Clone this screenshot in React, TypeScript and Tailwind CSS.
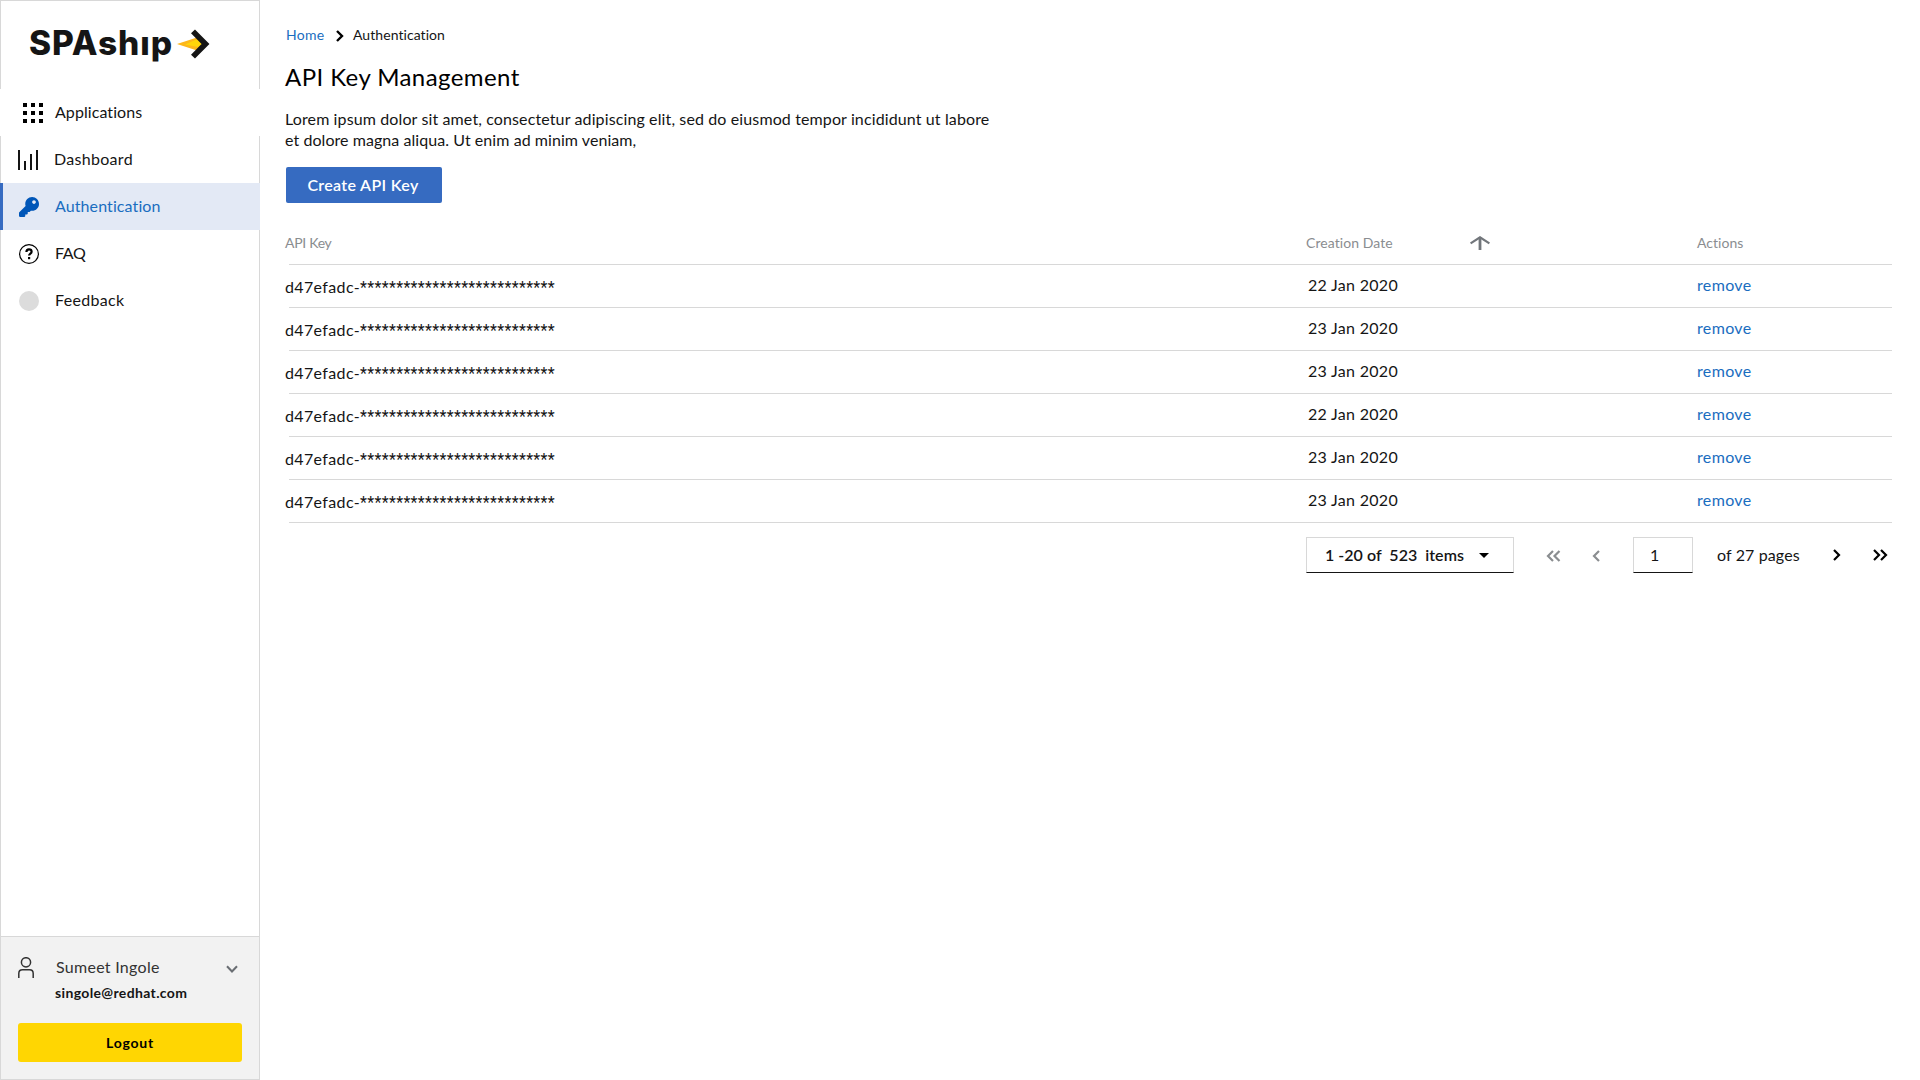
import type { ReactNode } from "react";

const rows = [
  { key: "d47efadc-", date: "22 Jan 2020" },
  { key: "d47efadc-", date: "23 Jan 2020" },
  { key: "d47efadc-", date: "23 Jan 2020" },
  { key: "d47efadc-", date: "22 Jan 2020" },
  { key: "d47efadc-", date: "23 Jan 2020" },
  { key: "d47efadc-", date: "23 Jan 2020" },
];

const MASK = "*".repeat(27);

function LogoArrow() {
  return (
    <svg width="34" height="32" viewBox="0 0 34 32" className="mt-[27px] ml-[3px]">
      <path d="M0 16 20 9.600 26 16 20 22.400Z" fill="#fdb71b" />
      <path d="M8 16.400 19.500 11.500 26 16 21 19Z" fill="#ffd60a" />
      <path d="M16 3.400 28.500 16 16 28.600" fill="none" stroke="#151515" strokeWidth="5.6" />
    </svg>
  );
}

function GridIcon() {
  return (
    <svg width="20" height="20" viewBox="0 0 20 20" fill="#000" shapeRendering="crispEdges">
      {[0, 8, 16].map((y) => [0, 8, 16].map((x) => <rect key={`${x}-${y}`} x={x} y={y} width="4" height="4" />))}
    </svg>
  );
}

function BarsIcon() {
  return (
    <svg width="20" height="20" viewBox="0 0 20 20" fill="#151515" shapeRendering="crispEdges">
      <rect x="0" y="0" width="2" height="20" />
      <rect x="6" y="11" width="2" height="9" />
      <rect x="12" y="4" width="2" height="16" />
      <rect x="18" y="0" width="2" height="20" />
    </svg>
  );
}

function KeyIcon() {
  return (
    <svg width="20" height="20" viewBox="0 0 512 512" fill="#0056b8">
      <path d="M512 176.001C512 273.203 433.202 352 336 352c-11.22 0-22.19-1.062-32.827-3.069l-24.012 27.014A23.999 23.999 0 0 1 261.223 384H224v40c0 13.255-10.745 24-24 24h-40v40c0 13.255-10.745 24-24 24H24c-13.255 0-24-10.745-24-24v-78.059c0-6.365 2.529-12.47 7.029-16.971l161.802-161.802C163.108 213.814 160 195.271 160 176 160 78.798 238.797.001 335.999 0 433.488-.001 512 78.511 512 176.001zM336 128c0 26.51 21.49 48 48 48s48-21.49 48-48-21.49-48-48-48-48 21.49-48 48z" />
    </svg>
  );
}

function HelpIcon() {
  return (
    <svg width="20" height="20" viewBox="0 0 20 20" fill="none" stroke="#000">
      <circle cx="10" cy="10" r="9.4" strokeWidth="1.2" />
      <path d="M7.4 8.1C7.4 6.3 8.5 5.4 10 5.4s2.6.9 2.6 2.3c0 1.900-2.500 1.900-2.500 3.900" strokeWidth="2.2" />
      <path d="M9 13h2.200v2.200H9z" fill="#000" stroke="none" />
    </svg>
  );
}

function UserIcon() {
  return (
    <svg width="16" height="21" viewBox="0 0 16 21" fill="none" stroke="#333" strokeWidth="1.5">
      <circle cx="8" cy="5.3" r="4.6" />
      <path d="M.8 21v-4.500q0-3.700 3.700-3.700h7q3.700 0 3.700 3.700V21" />
    </svg>
  );
}

function Chevrons({ path, width, className }: { path: string; width: number; className: string }) {
  return (
    <svg width={width} height="12" viewBox={`0 0 ${width} 12`} fill="none" stroke="currentColor" strokeWidth="2.2" className={className}>
      <path d={path} />
    </svg>
  );
}

function NavItem({ icon, label, labelClass, className = "" }: { icon: ReactNode; label: string; labelClass: string; className?: string }) {
  return (
    <a className={`flex h-[47px] items-center leading-5 ${className}`}>
      {icon}
      <span className={`pb-px ${labelClass}`}>{label}</span>
    </a>
  );
}

function Sidebar() {
  return (
    <aside className="flex w-[260px] flex-col">
      <div className="flex h-[89px] border border-b-0 border-[#d8d8d8] pl-[28px]">
        <span className="mt-[20px] h-[44px] w-[145px] font-['Inter'] text-[33.5px] leading-[44px] font-extrabold tracking-[0.9px] whitespace-nowrap text-[#151515]">
          SPAshıp
        </span>
        <LogoArrow />
      </div>
      <NavItem className="bg-white pl-[23px]" icon={<GridIcon />} label="Applications" labelClass="ml-3 tracking-[0.07px]" />
      <NavItem className="border-x border-[#d8d8d8] pl-[17px]" icon={<BarsIcon />} label="Dashboard" labelClass="ml-[16px] tracking-[0.3px]" />
      <NavItem className="border-l-[3px] border-[#366bc1] bg-[#e3e9f5] pl-4 text-[#1a6dc0]" icon={<KeyIcon />} label="Authentication" labelClass="ml-4 tracking-[0.1px]" />
      <NavItem className="border-x border-[#d8d8d8] pl-[18px]" icon={<HelpIcon />} label="FAQ" labelClass="ml-[16px] -tracking-[0.33px]" />
      <NavItem
        className="border-x border-[#d8d8d8] pl-[18px]"
        icon={<span className="size-5 rounded-full bg-[#dcdcdc]" />}
        label="Feedback"
        labelClass="ml-[16px] tracking-[0.32px]"
      />
      <div className="flex-1 border-x border-[#d8d8d8]" />
      <div className="h-[144px] border border-[#d8d8d8] bg-[#f2f2f2] px-[17px] pt-5">
        <div className="flex h-[21px]">
          <UserIcon />
          <span className="ml-[22px] w-[164px] leading-5 tracking-[0.28px] text-[#333]">Sumeet Ingole</span>
          <svg width="16" height="12" viewBox="0 0 16 12" fill="none" stroke="#6a6e73" strokeWidth="2" className="mt-[7px] ml-1">
            <path d="M3 2.200 8 7.500 13 2.200" />
          </svg>
        </div>
        <div className="mt-[5px] ml-[37px] text-sm leading-5 font-bold tracking-[0.35px] text-[#151515]">singole@redhat.com</div>
        <button className="mt-[20px] block h-[39px] w-[224px] rounded-[3px] bg-[#ffd602] pt-px text-sm font-bold tracking-[0.78px] text-black">Logout</button>
      </div>
    </aside>
  );
}

function Divider() {
  return <div className="ml-1 h-px bg-[#d8d8d8]" />;
}

function KeyTable() {
  return (
    <div className="w-[1607px]">
      <div className="grid h-[61px] grid-cols-[1021px_391px_195px] pt-[30px] text-sm leading-5 text-[#8a8d90]">
        <span className="-tracking-[0.3px]">API Key</span>
        <span className="flex">
          <span className="w-[164px] tracking-[0.08px]">Creation Date</span>
          <svg width="20" height="14" viewBox="0 0 20 14" fill="none" stroke="#72767b" className="mt-[3px]">
            <path d="M10 14V1" strokeWidth="2.800" />
            <path d="M.6 7.400 10 1.300 19.400 7.400" strokeWidth="2.200" />
          </svg>
        </span>
        <span className="tracking-[0.03px]">Actions</span>
      </div>
      <Divider />
      {rows.map((row, i) => (
        <div key={i}>
          <div className="grid h-[42px] grid-cols-[1021px_391px_195px] leading-5">
            <span className="pt-3 tracking-[0.36px] text-[#151515]">
              {row.key}
              <span className="font-['Roboto'] tracking-[0.33px]">{MASK}</span>
            </span>
            <span className="pt-[10px] pl-[2px] tracking-[0.3px] text-[#151515]">{row.date}</span>
            <a className="pt-[10px] tracking-[0.35px] text-[#1a6dc0]">remove</a>
          </div>
          <Divider />
        </div>
      ))}
    </div>
  );
}

function Pagination() {
  return (
    <div className="mt-[14px] ml-[1021px] flex h-9 text-[#151515]">
      <div className="flex w-[208px] items-center border border-b-[#151515] border-[#d8d8d8] pl-[18px]">
        <span className="w-[154px] font-semibold tracking-[0.03px] whitespace-pre">1 -20 of  523  items</span>
        <svg width="10" height="5" viewBox="0 0 10 5">
          <path d="M0 0h10L5 5z" fill="#000" />
        </svg>
      </div>
      <Chevrons className="mt-[13px] ml-[31px] text-[#8a8d90]" width={16} path="M8 1 3 6l5 5M14.500 1l-5 5 5 5" />
      <Chevrons className="mt-[13px] ml-[31px] text-[#8a8d90]" width={8} path="M7 1 2 6l5 5" />
      <div className="ml-[33px] flex w-[60px] items-center border border-b-[#151515] border-[#d8d8d8] pl-[16px]">1</div>
      <span className="ml-[24px] w-[112px] self-center tracking-[0.12px]">of 27 pages</span>
      <Chevrons className="mt-[12px] ml-[4px] text-black" width={8} path="M1 1l5 5-5 5" />
      <Chevrons className="mt-[12px] ml-[32px] text-black" width={16} path="M1 1l5 5-5 5M8 1l5 5-5 5" />
    </div>
  );
}

export default function App() {
  return (
    <div className="flex h-[1080px] w-[1920px] overflow-hidden bg-white font-['Lato',sans-serif] text-base text-[#151515]">
      <Sidebar />
      <main className="flex-1 pt-[25px] pl-[25px]">
        <nav className="flex h-5 items-center text-sm leading-5">
          <a className="w-[51px] pl-px tracking-[0.3px] text-[#1a6dc0]">Home</a>
          <svg width="8" height="12" viewBox="0 0 8 12" fill="none" stroke="#000" strokeWidth="2.400" className="mt-[2px]">
            <path d="M1 1l5 5-5 5" />
          </svg>
          <span className="ml-[9px] tracking-[0.06px]">Authentication</span>
        </nav>
        <h1 className="mt-4 text-2xl leading-8 tracking-[0.42px] text-black">API Key Management</h1>
        <p className="mt-[15px] leading-[21px] whitespace-nowrap">
          <span className="tracking-[0.12px]">Lorem ipsum dolor sit amet, consectetur adipiscing elit, sed do eiusmod tempor incididunt ut labore</span>
          <br />
          <span className="tracking-[0.06px]">et dolore magna aliqua. Ut enim ad minim veniam,</span>
        </p>
        <button className="mt-[17px] ml-px block h-9 w-[156px] rounded-[2px] bg-[#366bc1] pr-[2px] font-semibold tracking-[0.33px] text-white">Create API Key</button>
        <KeyTable />
        <Pagination />
      </main>
    </div>
  );
}
